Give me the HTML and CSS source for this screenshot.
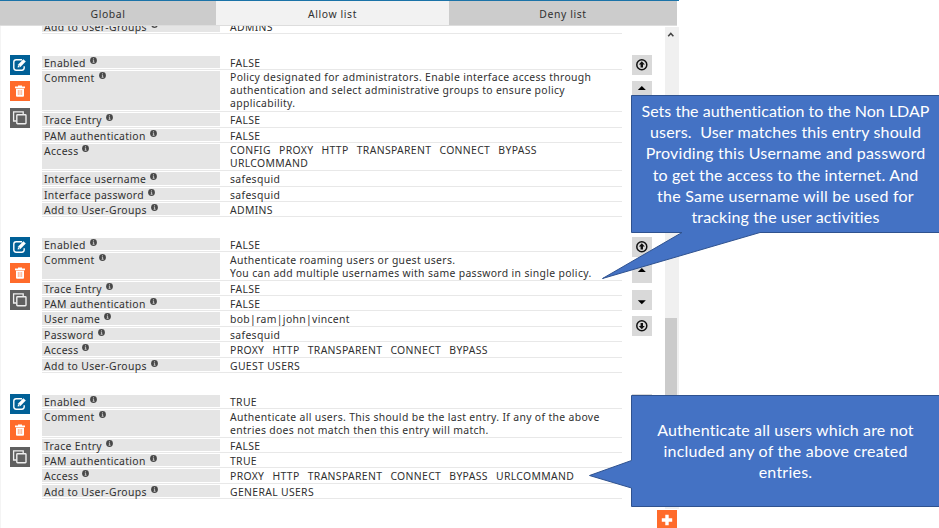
FILE: index.html
```html
<!DOCTYPE html>
<html lang="en">
<head>
<meta charset="utf-8">
<title>Allow list</title>
<link rel="stylesheet" href="styles.css">
</head>
<body>
<svg class="defs" width="0" height="0">
  <symbol id="edit" viewBox="0 0 20 20"><path d="M12 4.7H6.2Q3.8 4.7 3.8 7v5.8q0 2.4 2.4 2.4h5.6q2.4 0 2.4-2.4v-1.6" fill="none" stroke="#fff" stroke-width="1.4"/><path d="M7.6 12.4l.5-2.8 5.3-5.4 2.4 2.3-5.4 5.4z" fill="#fff"/><path d="M8.4 10.1l1.6 1.6" stroke="#006097" stroke-width=".7"/></symbol>
  <symbol id="trash" viewBox="0 0 20 20"><path d="M8 5.5V4.4h4v1.1h3v1.7H5V5.5zM6 7.8h8v6.9q0 1-1 1H7q-1 0-1-1z" fill="#fff"/><path d="M8.3 9v5M10 9v5M11.7 9v5" stroke="#ff9c70" stroke-width=".8"/></symbol>
  <symbol id="copy" viewBox="0 0 20 20"><path d="M6.7 13H3.600V3.800h9.600v2.500" fill="none" stroke="#eee" stroke-width="1.3"/><rect x="6.8" y="6.8" width="9.2" height="9" rx=".7" fill="#606060" stroke="#eee" stroke-width="1.4"/></symbol>
  <symbol id="info" viewBox="0 0 7 7"><circle cx="3.5" cy="3.5" r="3.4" fill="#484848"/><path d="M3.5 1.3v1M2.8 3.1h.8v2M2.6 5.3h2" fill="none" stroke="#ddd" stroke-width=".8"/></symbol>
  <symbol id="top" viewBox="0 0 20 20"><circle cx="9.8" cy="9.8" r="5" fill="none" stroke="#111" stroke-width="1.5"/><path d="M9.8 6.3l3 3.300H11v3H8.600v-3H6.800z" fill="#111"/></symbol>
  <symbol id="bottom" viewBox="0 0 20 20"><circle cx="9.8" cy="9.8" r="5" fill="none" stroke="#111" stroke-width="1.5"/><path d="M9.8 13.3l3-3.300H11V7H8.600v3H6.800z" fill="#111"/></symbol>
  <symbol id="up" viewBox="0 0 20 20"><path d="M9.8 4.9l4 4.1H5.8z" fill="#000"/></symbol>
  <symbol id="down" viewBox="0 0 20 20"><path d="M9.8 14.2l4-4H5.8z" fill="#000"/></symbol>
</svg>
<div class="app">
  <nav class="tabs"><div class="tab global">Global</div><div class="tab allow">Allow list</div><div class="tab deny">Deny list</div></nav>
  <div class="body">
    <main class="list">
      <section class="entry partial">
        <div class="tools"></div>
        <div class="fields"><div class="row"><div class="label">Add to User-Groups<svg><use href="#info"/></svg></div><div class="value">ADMINS</div></div></div>
        <div class="moves"></div>
      </section>
      <section class="entry first">
        <div class="tools"><svg class="blue"><use href="#edit"/></svg><svg class="orange"><use href="#trash"/></svg><svg class="gray"><use href="#copy"/></svg></div>
        <div class="fields">
          <div class="row"><div class="label">Enabled<svg><use href="#info"/></svg></div><div class="value">FALSE</div></div>
          <div class="row three"><div class="label">Comment<svg><use href="#info"/></svg></div><div class="value">Policy designated for administrators. Enable interface access through<br>authentication and select administrative groups to ensure policy<br>applicability.</div></div>
          <div class="row"><div class="label">Trace Entry<svg><use href="#info"/></svg></div><div class="value">FALSE</div></div>
          <div class="row"><div class="label">PAM authentication<svg><use href="#info"/></svg></div><div class="value">FALSE</div></div>
          <div class="row two"><div class="label">Access<svg><use href="#info"/></svg></div><div class="value access">CONFIG PROXY HTTP TRANSPARENT CONNECT BYPASS<br>URLCOMMAND</div></div>
          <div class="row"><div class="label">Interface username<svg><use href="#info"/></svg></div><div class="value">safesquid</div></div>
          <div class="row"><div class="label">Interface password<svg><use href="#info"/></svg></div><div class="value">safesquid</div></div>
          <div class="row"><div class="label">Add to User-Groups<svg><use href="#info"/></svg></div><div class="value">ADMINS</div></div>
        </div>
        <div class="moves"><svg><use href="#top"/></svg><svg><use href="#up"/></svg><svg><use href="#down"/></svg><svg><use href="#bottom"/></svg></div>
      </section>
      <section class="entry second">
        <div class="tools"><svg class="blue"><use href="#edit"/></svg><svg class="orange"><use href="#trash"/></svg><svg class="gray"><use href="#copy"/></svg></div>
        <div class="fields">
          <div class="row"><div class="label">Enabled<svg><use href="#info"/></svg></div><div class="value">FALSE</div></div>
          <div class="row two"><div class="label">Comment<svg><use href="#info"/></svg></div><div class="value">Authenticate roaming users or guest users.<br>You can add multiple usernames with same password in single policy.</div></div>
          <div class="row"><div class="label">Trace Entry<svg><use href="#info"/></svg></div><div class="value">FALSE</div></div>
          <div class="row"><div class="label">PAM authentication<svg><use href="#info"/></svg></div><div class="value">FALSE</div></div>
          <div class="row"><div class="label">User name<svg><use href="#info"/></svg></div><div class="value">bob|ram|john|vincent</div></div>
          <div class="row"><div class="label">Password<svg><use href="#info"/></svg></div><div class="value">safesquid</div></div>
          <div class="row"><div class="label">Access<svg><use href="#info"/></svg></div><div class="value access">PROXY HTTP TRANSPARENT CONNECT BYPASS</div></div>
          <div class="row"><div class="label">Add to User-Groups<svg><use href="#info"/></svg></div><div class="value">GUEST USERS</div></div>
        </div>
        <div class="moves"><svg><use href="#top"/></svg><svg><use href="#up"/></svg><svg><use href="#down"/></svg><svg><use href="#bottom"/></svg></div>
      </section>
      <section class="entry third">
        <div class="tools"><svg class="blue"><use href="#edit"/></svg><svg class="orange"><use href="#trash"/></svg><svg class="gray"><use href="#copy"/></svg></div>
        <div class="fields">
          <div class="row"><div class="label">Enabled<svg><use href="#info"/></svg></div><div class="value">TRUE</div></div>
          <div class="row two"><div class="label">Comment<svg><use href="#info"/></svg></div><div class="value">Authenticate all users. This should be the last entry. If any of the above<br>entries does not match then this entry will match.</div></div>
          <div class="row"><div class="label">Trace Entry<svg><use href="#info"/></svg></div><div class="value">FALSE</div></div>
          <div class="row"><div class="label">PAM authentication<svg><use href="#info"/></svg></div><div class="value">TRUE</div></div>
          <div class="row"><div class="label">Access<svg><use href="#info"/></svg></div><div class="value access">PROXY HTTP TRANSPARENT CONNECT BYPASS URLCOMMAND</div></div>
          <div class="row"><div class="label">Add to User-Groups<svg><use href="#info"/></svg></div><div class="value">GENERAL USERS</div></div>
        </div>
        <div class="moves"><svg><use href="#top"/></svg><svg><use href="#up"/></svg></div>
      </section>
    </main>
    <div class="scrollbar"><svg class="arrow" viewBox="0 0 12 14"><path d="M3.2 9.2L5.8 6.4l2.6 2.8" fill="none" stroke="#444" stroke-width="1.5"/></svg><div class="thumb"></div></div>
  </div>
</div>
<svg class="add" viewBox="0 0 20 20"><path d="M10 4.8v10.4M4.8 10h10.4" stroke="#fff" stroke-width="3.4"/></svg>
<svg class="shapes" viewBox="0 0 939 528"><g fill="#4472c4" stroke="#2f528f"><path d="M631.5 95.5H941V232.5H760L602.5 278.5 682 232.5H631.5z"/><path d="M631.5 395.5H941V506.5H631.5V488L589.5 475.5 631.5 460.5z"/></g></svg>
<div class="callout one"><span class="snug">Sets the authentication to the Non LDAP</span><span>users.&nbsp; User matches this entry should</span><span class="loose">Providing this Username and password</span><span>to get the access to the internet. And</span><span class="loose">the Same username will be used for</span><span>tracking the user activities</span></div>
<div class="callout last"><span>Authenticate all users which are not</span><span class="loose">included any of the above created</span><span class="loose">entries.</span></div>
</body>
</html>
```
FILE: styles.css
```css
* { box-sizing: border-box; }
body { margin: 0; width: 939px; height: 528px; overflow: hidden; background: #fff; color: #303030; font-family: "Noto Sans", sans-serif; font-size: 10.4px; letter-spacing: .34px; }
.defs { position: absolute; }
.app { width: 679px; height: 528px; border-top: 1px solid #1b73a8; }
.tabs { display: flex; height: 25px; width: 677px; border-bottom: 1px solid #ddd; line-height: 26px; text-align: center; letter-spacing: .6px; }
.tab { background: #ccc; height: 24px; }
.global { width: 216px; }
.allow { width: 233px; background: #f2f2f2; }
.deny { width: 228px; }
.body { display: flex; height: 502px; overflow: hidden; }
.list { width: 665px; border-left: 1px solid #f4f4f4; }
.entry { display: flex; }
.partial { margin-top: -7px; }
.first { margin-top: 20.6px; height: 182px; }
.second { height: 157px; }
.tools { width: 41px; padding: 0 0 0 9px; }
.tools svg, .moves svg { display: block; width: 20px; height: 20px; margin-bottom: 6.5px; }
.tools .blue { background: #006097; }
.tools .orange { background: #ff6b2b; }
.tools .gray { background: #606060; }
.fields { width: 580px; }
.row { display: flex; height: 15.4px; border-bottom: 1px solid #e8e8e8; line-height: 12.8px; white-space: nowrap; }
.row.two { height: 28.2px; }
.row.three { height: 41.8px; }
.label { flex: 0 0 178px; margin: 1px 0; padding-left: 2px; background: #e5e5e5; line-height: 15px; }
.label svg { width: 7px; height: 7px; margin-left: 4px; vertical-align: 3px; }
.value { padding-left: 10px; padding-top: 2px; }
.first .two .value, .first .three .value { padding-top: 1px; }
.access { word-spacing: 5.1px; }
.moves { width: 20px; margin-left: 10px; }
.moves svg { background: #d9d9d9; }
.scrollbar { width: 14px; height: 482px; margin-top: 1px; background: #f0f0f0; }
.arrow { display: block; width: 12px; height: 14px; }
.thumb { width: 12px; height: 150px; margin-top: 277px; background: #cbcbcb; }
.add { position: absolute; left: 657px; top: 509.5px; width: 20px; height: 20px; background: #ff6b2b; }
.shapes { position: absolute; left: 0; top: 0; width: 939px; height: 528px; }
.callout { position: absolute; left: 632px; width: 307px; display: flex; flex-direction: column; align-items: center; color: #fff; font: 16px/21.2px Lato, sans-serif; letter-spacing: .16px; white-space: nowrap; }
.snug { letter-spacing: .02px; }
.loose { letter-spacing: .23px; }
.one { top: 100px; }
.last { top: 418.5px; }
```
